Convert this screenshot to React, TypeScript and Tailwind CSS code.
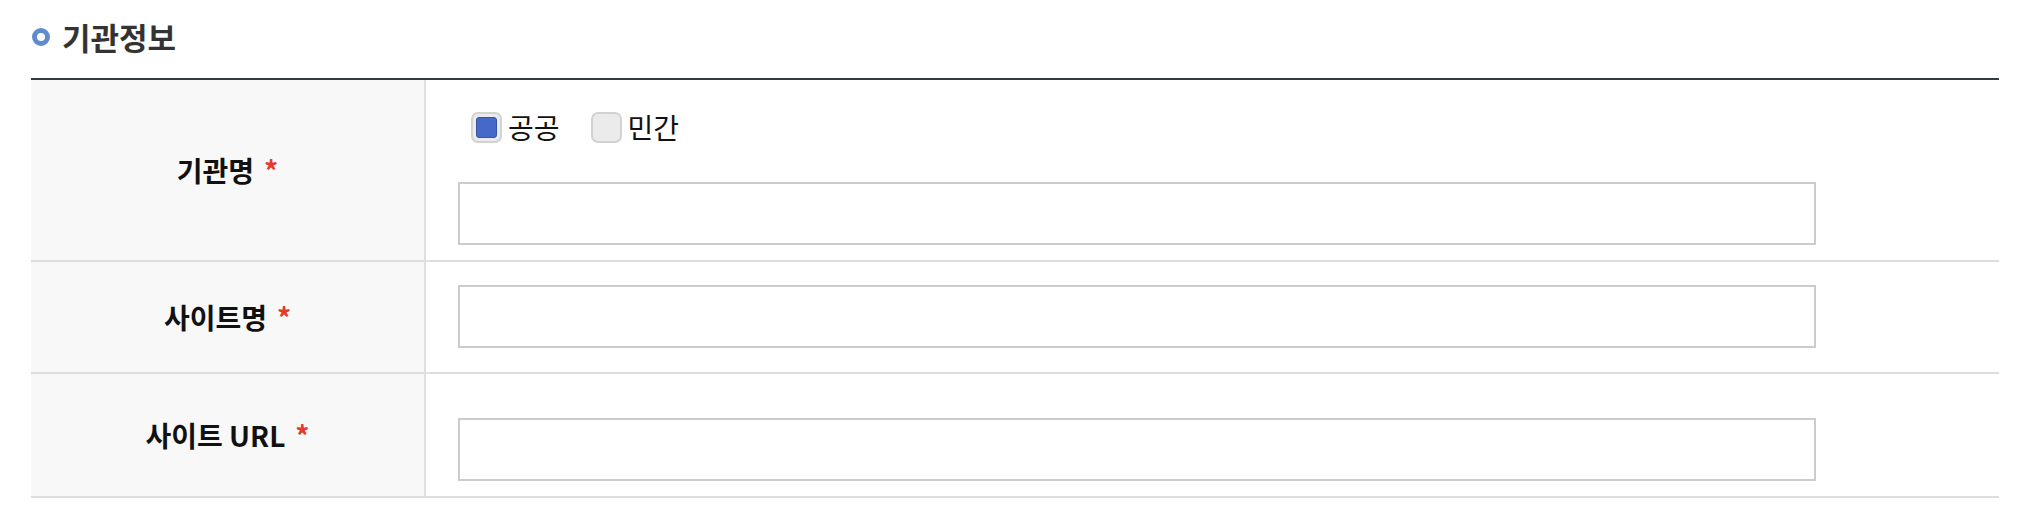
import React from "react";

const font = { fontFamily: '"Noto Sans CJK KR", "Noto Sans", sans-serif' };

function Required() {
    return <span className="ml-[10px] text-[#e5392d]">*</span>;
}

function Check({ checked, label }: { checked?: boolean; label: string }) {
    return (
        <label className="flex items-center gap-[6px]">
            <span className="flex h-[31px] w-[31px] items-center justify-center rounded-[7px] border-2 border-[#d2d2d2] bg-[#ebebeb]">
                {checked && <span className="h-[21px] w-[21px] rounded-[3px] border border-[#3454ac] bg-[#4669c9]" />}
            </span>
            <span className="text-[28px] leading-[31px] text-[#111]">{label}</span>
        </label>
    );
}

function TextBox() {
    return <div className="h-[63px] w-[1358px] border-2 border-[#cccccc] bg-white" />;
}

function Row({ label, children, className }: { label: React.ReactNode; children: React.ReactNode; className: string }) {
    return (
        <div className="flex border-b-2 border-[#dedede]">
            <div className="flex w-[395px] shrink-0 items-center justify-center border-r-2 border-[#e0e0e0] bg-[#f8f8f8]">
                <span className="text-[28px] font-bold leading-[36px] text-[#111]">{label}</span>
            </div>
            <div className={"flex-1 pl-[32px] " + className}>{children}</div>
        </div>
    );
}

export default function App() {
    return (
        <div className="h-[522px] w-[2022px] bg-white pl-[31px] pr-[23px] pt-[17px]" style={font}>
            <div className="flex h-[40px] items-center">
                <span className="ml-[1px] h-[18px] w-[18px] rounded-full border-[5px] border-[#5f8ccf] bg-white" />
                <h2 className="ml-[12px] text-[31px] font-bold leading-[40px] text-[#333]">기관정보</h2>
            </div>

            <div className="mt-[21px] border-t-2 border-[#333a45]">
                <Row label={<>기관명<Required /></>} className="h-[180px] pt-[32px]">
                    <div className="ml-[13px] flex items-center gap-[31px]">
                        <Check checked label="공공" />
                        <Check label="민간" />
                    </div>
                    <div className="mt-[39px]">
                        <TextBox />
                    </div>
                </Row>
                <Row label={<>사이트명<Required /></>} className="h-[110px] pt-[23px]">
                    <TextBox />
                </Row>
                <Row label={<>사이트 URL<Required /></>} className="h-[122px] pt-[44px]">
                    <TextBox />
                </Row>
            </div>
        </div>
    );
}
